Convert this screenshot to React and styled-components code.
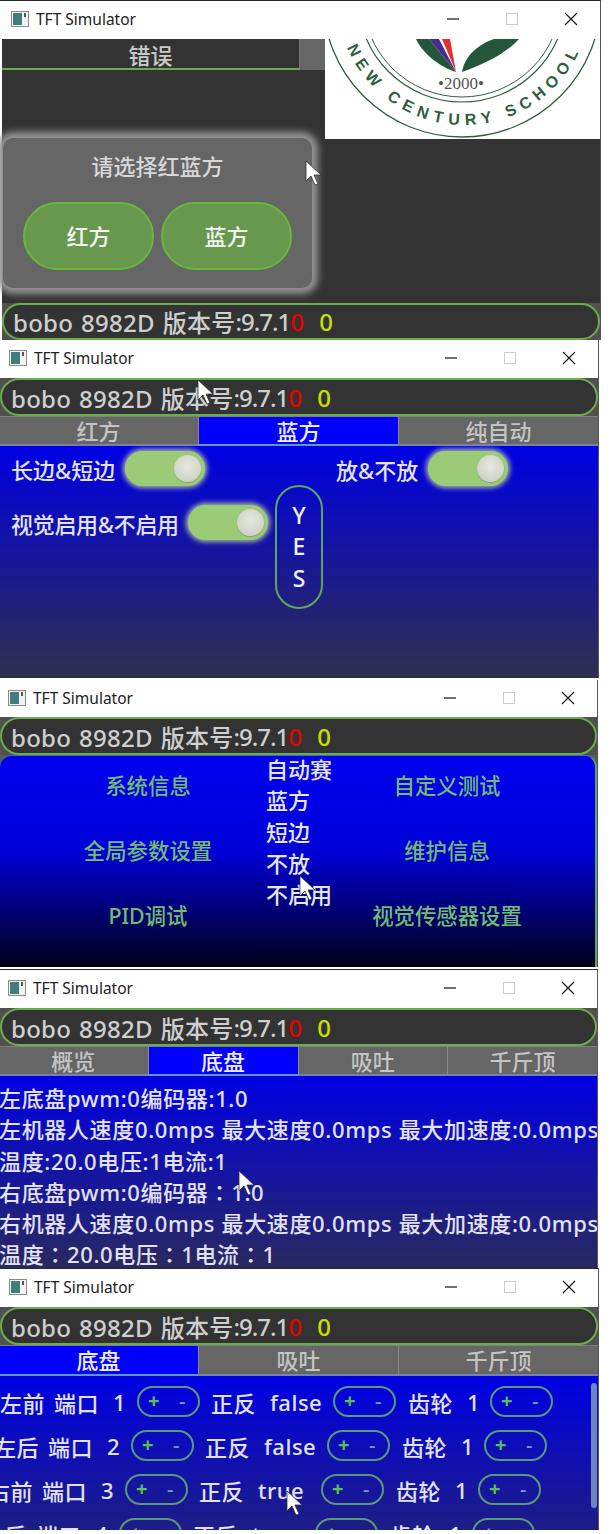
import styled, { createGlobalStyle } from "styled-components";

const GlobalStyle = createGlobalStyle`
  html, body {
    margin: 0;
    padding: 0;
    background: #fff;
  }
  * {
    box-sizing: border-box;
  }
`;

const FONT = `"Noto Sans", "Noto Sans CJK SC", sans-serif`;

const Page = styled.div`
  position: relative;
  width: 611px;
  height: 1534px;
  overflow: hidden;
  background: #fff;
  font-family: ${FONT};
  font-weight: 500;
`;

const Window = styled.section`
  width: ${(p) => p.$width}px;
  height: ${(p) => p.$height}px;
  margin-bottom: ${(p) => p.$gap || 0}px;
  display: flex;
  flex-direction: column;
  overflow: hidden;
  background: #fff;
  border-top: ${(p) => (p.$edge ? "1px solid #2a2a2a" : "none")};
  border-right: 1px solid #555;
`;

const TitleBar = styled.header`
  height: ${(p) => p.$height || 38}px;
  flex: none;
  display: flex;
  align-items: center;
  padding-left: ${(p) => p.$left || 9}px;
  padding-bottom: 2px;
  background: #fff;
`;

const TitleText = styled.span`
  margin-left: 7px;
  font-size: 15.5px;
  font-weight: 400;
  color: #222;
`;

const Controls = styled.div`
  margin-left: auto;
  display: flex;
`;

const Control = styled.div`
  width: 59px;
  height: 36px;
  display: flex;
  align-items: center;
  justify-content: center;
`;

const Status = styled.div`
  flex: none;
  background: #505050;
`;

const StatusPill = styled.div`
  height: ${(p) => p.$height || 38}px;
  display: flex;
  align-items: center;
  padding-left: 9px;
  border: 2px solid #6aad4c;
  border-radius: 19px;
  background: #333;
  color: #cfcfcf;
  font-size: 24px;
  letter-spacing: 0.25px;
  word-spacing: 1.5px;
  white-space: pre;
`;

const Version = styled.span`
  letter-spacing: -1px;
`;

const Red = styled.span`
  color: #e60000;
`;

const Yellow = styled.span`
  margin-left: 15px;
  color: #c8e000;
`;

const Tabs = styled.nav`
  flex: none;
  height: ${(p) => p.$height || 30}px;
  margin-left: -2px;
  display: grid;
  grid-template-columns: repeat(${(p) => p.$count}, 1fr);
  background: #666;
`;

const Tab = styled.div`
  display: flex;
  align-items: center;
  justify-content: center;
  font-size: 22px;
  color: ${(p) => (p.$active ? "#eef" : "#c4c4c4")};
  background: ${(p) => (p.$active ? "#0000ff" : "#666")};
  border-left: 1px solid #8a8a8a;
  border-top: 1px solid #808080;
  border-bottom: 2px solid ${(p) => (p.$active ? "#5a9ac0" : "#7a80a8")};
  line-height: 1;
`;

const Panel = styled.div`
  position: relative;
  flex: 1;
  min-height: 0;
  overflow: hidden;
  color: #e2e2f2;
  font-size: 22px;
  background: linear-gradient(#0000e4, #2f2f4c ${(p) => p.$stop || 100}%);
`;

/* first window */
const ErrorBody = styled.div`
  flex: 1;
  display: flex;
  flex-direction: column;
  background: #333;
  margin-left: 2px;
`;

const ErrorTop = styled.div`
  flex: 1;
  display: flex;
`;

const ErrorLeft = styled.div`
  width: 324px;
`;

const ErrorTabs = styled.div`
  height: 31px;
  display: flex;
  background: #666;
`;

const ErrorTab = styled.div`
  width: 298px;
  display: flex;
  align-items: center;
  justify-content: center;
  background: #333;
  border-bottom: 2px solid #69b04a;
  border-right: 1px solid #777;
  color: #cacaca;
  font-size: 22px;
`;

const Dialog = styled.div`
  width: 309px;
  height: 150px;
  margin: 68px 0 0 1px;
  display: flex;
  flex-direction: column;
  align-items: center;
  padding-top: 13px;
  border-radius: 10px;
  background: #666;
  box-shadow: 0 0 7px 6px #949494;
`;

const DialogTitle = styled.div`
  font-size: 22px;
  line-height: 30px;
  color: #d8d8d8;
`;

const DialogButtons = styled.div`
  margin-top: 21px;
  display: flex;
  gap: 7px;
`;

const SideButton = styled.div`
  width: 131px;
  height: 68px;
  display: flex;
  align-items: center;
  justify-content: center;
  padding-bottom: 3px;
  border: 2px solid #66b83e;
  border-radius: 34px;
  background: #68984e;
  color: #f4f4f4;
  font-size: 22px;
`;

const LogoBox = styled.div`
  width: 275px;
  height: 100px;
  flex: none;
  background: #fff;
`;

/* second window */
const SwitchLayout = styled.div`
  display: flex;
`;

const SwitchColumn = styled.div`
  width: ${(p) => p.$width}px;
  padding-left: ${(p) => p.$left || 0}px;
  padding-top: 5px;
  display: flex;
  flex-direction: column;
  gap: ${(p) => p.$gap || 0}px;
`;

const SwitchRow = styled.div`
  height: 35px;
  display: flex;
  align-items: center;
  gap: ${(p) => p.$gap || 10}px;
  white-space: nowrap;
  letter-spacing: ${(p) => p.$spacing || 0}px;
`;

const Toggle = styled.div`
  width: 80px;
  height: 35px;
  flex: none;
  display: flex;
  align-items: center;
  justify-content: flex-end;
  padding-right: 4px;
  border-radius: 18px;
  background: #9ccb78;
  box-shadow: 0 0 5px 2px #a8b8a0;
`;

const Knob = styled.div`
  width: 27px;
  height: 27px;
  border-radius: 50%;
  background: radial-gradient(circle at 50% 40%, #e6e8e0, #c6cabc);
  box-shadow: 0 1px 1px #8a9a78;
`;

const YesPill = styled.div`
  width: 48px;
  height: 124px;
  margin-top: 39px;
  display: flex;
  flex-direction: column;
  align-items: center;
  justify-content: center;
  border: 2px solid #5da85d;
  border-radius: 24px;
  color: #eee;
  font-size: 23px;
  line-height: 31.5px;
`;

/* third window */
const MenuBack = styled.div`
  flex: 1;
  display: flex;
  background: #5c5c5c;
`;

const MenuPanel = styled.div`
  flex: 1;
  display: grid;
  grid-template-columns: 266px 65px 232px;
  border-radius: 12px 12px 0 0;
  border-top: 1px solid #3a70b0;
  border-right: 2px solid #58a868;
  background: linear-gradient(#0000f0 0%, #0000d8 45%, #000018 100%);
`;

const MenuColumn = styled.div`
  padding-left: ${(p) => (p.$left ? 30 : 0)}px;
  padding-top: 14px;
  display: flex;
  flex-direction: column;
  align-items: center;
`;

const MenuItem = styled.div`
  height: 65px;
  line-height: 32px;
  color: #70bc70;
  font-size: 21.4px;
  white-space: nowrap;
`;

const StateList = styled.div`
  margin-top: -2px;
  line-height: 31.3px;
  color: #e6e6f4;
  font-size: 22px;
  white-space: nowrap;
`;

/* fourth window */
const InfoList = styled.div`
  margin-left: -1px;
  padding-top: 7px;
  line-height: 31.3px;
  font-size: 22px;
  letter-spacing: 0.65px;
  white-space: nowrap;
`;

const InfoLine = styled.div`
  font-family: ${(p) =>
    p.$centered
      ? `"Noto Sans", "Noto Sans CJK TC", sans-serif`
      : "inherit"};
`;

/* fifth window */
const PortRows = styled.div`
  padding-top: 10px;
  display: flex;
  flex-direction: column;
  gap: 13px;
`;

const PortRow = styled.div`
  height: 31px;
  display: flex;
  align-items: center;
  margin-left: ${(p) => p.$indent}px;
  white-space: nowrap;
  font-size: 22px;
  letter-spacing: 0.5px;
`;

const Word = styled.span`
  width: ${(p) => p.$width}px;
  flex: none;
`;

const Stepper = styled.div`
  width: 63px;
  height: 31px;
  flex: none;
  display: flex;
  align-items: center;
  justify-content: space-between;
  padding: 0 12px 2px 9px;
  margin-right: ${(p) => p.$after || 0}px;
  border: 2px solid #5a9a78;
  border-radius: 16px;
  font-size: 20px;
  line-height: 1;
`;

const Plus = styled.span`
  color: #5cc050;
  font-weight: 700;
`;

const Minus = styled.span`
  color: #7a9ab8;
`;

const ScrollBar = styled.div`
  position: absolute;
  top: 7px;
  right: 1px;
  width: 6px;
  height: 125px;
  border-radius: 3px;
  background: #6c84c0;
`;

const Cursor = styled.svg`
  position: absolute;
  left: ${(p) => p.$x}px;
  top: ${(p) => p.$y}px;
  width: 18px;
  height: 26px;
`;

const AppIcon = () => (
  <svg width="18" height="16" viewBox="0 0 18 16">
    <rect x="0.5" y="0.5" width="17" height="15" fill="#f2f2f2" stroke="#8a8a8a" />
    <rect x="2" y="2" width="9" height="12" fill="#3e7f7c" />
    <rect x="13" y="2" width="2" height="4" fill="#555" />
  </svg>
);

const TitleRow = ({ height, left }) => (
  <TitleBar $height={height} $left={left}>
    <AppIcon />
    <TitleText>TFT Simulator</TitleText>
    <Controls>
      <Control>
        <svg width="14" height="14" viewBox="0 0 14 14">
          <path d="M1 7h12" stroke="#111" strokeWidth="1.2" />
        </svg>
      </Control>
      <Control>
        <svg width="12" height="14" viewBox="0 0 12 14">
          <rect x="0.5" y="1.5" width="11" height="11" fill="none" stroke="#ccc" />
        </svg>
      </Control>
      <Control>
        <svg width="14" height="14" viewBox="0 0 14 14">
          <path d="M1 1l12 12M13 1L1 13" stroke="#111" strokeWidth="1.1" />
        </svg>
      </Control>
    </Controls>
  </TitleBar>
);

const StatusBar = ({ height }) => (
  <Status>
    <StatusPill $height={height}>
      bobo 8982D 版本号<Version>:9.7.1</Version>
      <Red>0</Red>
      <Yellow>0</Yellow>
    </StatusPill>
  </Status>
);

const TabStrip = ({ items, active, height }) => (
  <Tabs $count={items.length} $height={height}>
    {items.map((t) => (
      <Tab key={t} $active={t === active}>
        {t}
      </Tab>
    ))}
  </Tabs>
);

const Arrow = ({ x, y }) => (
  <Cursor $x={x} $y={y} viewBox="0 0 18 26">
    <path
      d="M1 1v20l5-5 4 9 3-1-4-9h7z"
      fill="#fff"
      stroke="#333"
      strokeWidth="0.8"
    />
  </Cursor>
);

const SchoolLogo = () => (
  <svg width="275" height="100" viewBox="0 0 275 100">
    <defs>
      <path id="schoolArc" d="M12 -41 A127 127 0 0 0 266 -41" />
    </defs>
    <g fill="none" stroke="#2f5f3f">
      <circle cx="137" cy="-41" r="139" strokeWidth="1.3" />
      <circle cx="137" cy="-41" r="104" strokeWidth="1.2" />
      <circle cx="137" cy="-41" r="99" strokeWidth="1" />
    </g>
    <path d="M91 0H104L131 33C115 28 98 15 91 0z" fill="#24563a" />
    <path d="M104 0H114L131 33z" fill="#4a2a90" />
    <path d="M117 0H125L131 33z" fill="#e03030" />
    <path d="M137 33C140 15 155 5 169 0H194C180 15 160 25 137 33z" fill="#24563a" />
    <text
      x="136"
      y="50"
      textAnchor="middle"
      fontFamily="Liberation Serif, serif"
      fontSize="17"
      fontWeight="400"
      fill="#555"
    >
      •2000•
    </text>
    <text
      fontFamily="Liberation Sans, sans-serif"
      fontSize="16"
      fontWeight="700"
      fill="#2f5f3f"
      letterSpacing="5.9"
    >
      <textPath href="#schoolArc" startOffset="50%" textAnchor="middle">
        NEW CENTURY SCHOOL
      </textPath>
    </text>
  </svg>
);

const info = [
  { text: "左底盘pwm:0编码器:1.0" },
  { text: "左机器人速度0.0mps 最大速度0.0mps 最大加速度:0.0mps" },
  { text: "温度:20.0电压:1电流:1" },
  { text: "右底盘pwm:0编码器：1.0", centered: true },
  { text: "右机器人速度0.0mps 最大速度0.0mps 最大加速度:0.0mps" },
  { text: "温度：20.0电压：1电流：1", centered: true },
];

const ports = [
  { name: "左前", port: 1, dir: "false", indent: 0 },
  { name: "左后", port: 2, dir: "false", indent: -6 },
  { name: "右前", port: 3, dir: "true", indent: -12 },
  { name: "右后", port: 4, dir: "true", indent: -18 },
];

const Step = ({ after }) => (
  <Stepper $after={after}>
    <Plus>+</Plus>
    <Minus>-</Minus>
  </Stepper>
);

export default function App() {
  return (
    <Page>
      <GlobalStyle />

      <Window $width={601} $height={340} $edge>
        <TitleRow left={11} />
        <ErrorBody>
          <ErrorTop>
            <ErrorLeft>
              <ErrorTabs>
                <ErrorTab>错误</ErrorTab>
              </ErrorTabs>
              <Dialog>
                <DialogTitle>请选择红蓝方</DialogTitle>
                <DialogButtons>
                  <SideButton>红方</SideButton>
                  <SideButton>蓝方</SideButton>
                </DialogButtons>
              </Dialog>
            </ErrorLeft>
            <LogoBox>
              <SchoolLogo />
            </LogoBox>
          </ErrorTop>
          <StatusBar height={37} />
        </ErrorBody>
      </Window>

      <Window $width={599} $height={338} $gap={2}>
        <TitleRow />
        <StatusBar />
        <TabStrip items={["红方", "蓝方", "纯自动"]} active="蓝方" />
        <Panel>
          <SwitchLayout>
            <SwitchColumn $width={275} $left={11} $gap={19}>
              <SwitchRow>
                长边&短边
                <Toggle>
                  <Knob />
                </Toggle>
              </SwitchRow>
              <SwitchRow $gap={9} $spacing={-0.3}>
                视觉启用&不启用
                <Toggle>
                  <Knob />
                </Toggle>
              </SwitchRow>
            </SwitchColumn>
            <YesPill>
              <span>Y</span>
              <span>E</span>
              <span>S</span>
            </YesPill>
            <SwitchColumn $width={270} $left={13}>
              <SwitchRow>
                放&不放
                <Toggle>
                  <Knob />
                </Toggle>
              </SwitchRow>
            </SwitchColumn>
          </SwitchLayout>
        </Panel>
      </Window>

      <Window $width={598} $height={287} $gap={2}>
        <TitleRow height={37} left={8} />
        <StatusBar />
        <MenuBack>
          <MenuPanel>
            <MenuColumn $left>
              <MenuItem>系统信息</MenuItem>
              <MenuItem>全局参数设置</MenuItem>
              <MenuItem>PID调试</MenuItem>
            </MenuColumn>
            <StateList>
              <div>自动赛</div>
              <div>蓝方</div>
              <div>短边</div>
              <div>不放</div>
              <div>不启用</div>
            </StateList>
            <MenuColumn>
              <MenuItem>自定义测试</MenuItem>
              <MenuItem>维护信息</MenuItem>
              <MenuItem>视觉传感器设置</MenuItem>
            </MenuColumn>
          </MenuPanel>
        </MenuBack>
      </Window>

      <Window $width={598} $height={299} $edge>
        <TitleRow left={8} />
        <StatusBar />
        <TabStrip items={["概览", "底盘", "吸吐", "千斤顶"]} active="底盘" />
        <Panel $stop={115}>
          <InfoList>
            {info.map((line) => (
              <InfoLine key={line.text} $centered={line.centered}>
                {line.text}
              </InfoLine>
            ))}
          </InfoList>
        </Panel>
      </Window>

      <Window $width={599} $height={262} $edge>
        <TitleRow />
        <StatusBar />
        <TabStrip items={["底盘", "吸吐", "千斤顶"]} active="底盘" height={31} />
        <Panel $stop={160}>
          <PortRows>
            {ports.map((r) => (
              <PortRow key={r.name} $indent={r.indent}>
                <Word $width={54}>{r.name}</Word>
                <Word $width={59}>端口</Word>
                <Word $width={24}>{r.port}</Word>
                <Step after={11} />
                <Word $width={59}>正反</Word>
                <Word $width={63}>{r.dir}</Word>
                <Step after={12} />
                <Word $width={59}>齿轮</Word>
                <Word $width={23}>1</Word>
                <Step />
              </PortRow>
            ))}
          </PortRows>
          <ScrollBar />
        </Panel>
      </Window>

      <Arrow x={305} y={160} />
      <Arrow x={197} y={379} />
      <Arrow x={299} y={875} />
      <Arrow x={238} y={1170} />
      <Arrow x={286} y={1490} />
    </Page>
  );
}
